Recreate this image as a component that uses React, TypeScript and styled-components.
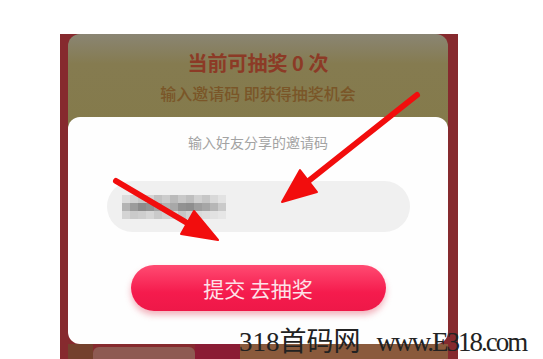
import React from "react";
import styled, { createGlobalStyle } from "styled-components";

const GlobalStyle = createGlobalStyle`
  html, body { margin: 0; padding: 0; background: #ffffff; }
  body { font-family: "Noto Sans CJK SC", "Noto Sans", sans-serif; }
  * { box-sizing: border-box; }
`;

const Page = styled.div`
  position: relative;
  width: 543px;
  height: 359px;
  overflow: hidden;
  padding: 34px 0 0 60px;
  background: #ffffff;
`;

const Frame = styled.div`
  width: 398px;
  height: 325px;
  background: #862a2e;
  padding: 0 10px 0 8px;
  display: flex;
  flex-direction: column;
`;

const Panel = styled.div`
  flex: 1;
  display: flex;
  flex-direction: column;
  border-radius: 12px 12px 0 0;
  background: linear-gradient(
    180deg,
    #8a8573 0px,
    #857b50 30px,
    #847a4a 100px,
    #862a2e 112px
  );
  overflow: hidden;
`;

const Header = styled.div`
  height: 83px;
  padding-top: 15px;
  display: flex;
  flex-direction: column;
  align-items: center;
  gap: 5px;
`;

const Title = styled.div`
  font-size: 20px;
  line-height: 28px;
  font-weight: 700;
  color: #8c3a26;
  white-space: pre;
`;

const Subtitle = styled.div`
  font-size: 16px;
  line-height: 22px;
  font-weight: 500;
  color: #7a5628;
  white-space: pre;
`;

const Modal = styled.div`
  height: 227px;
  background: #fefefe;
  border-radius: 12px;
  display: flex;
  flex-direction: column;
  align-items: center;
  padding-top: 15px;
`;

const Hint = styled.div`
  font-size: 14px;
  line-height: 20px;
  color: #a3a3a3;
`;

const CodeField = styled.div`
  margin-top: 29px;
  width: 303px;
  height: 51px;
  border-radius: 26px;
  background: #f0f0f0;
  display: flex;
  align-items: center;
  padding-left: 15px;
`;

const SubmitButton = styled.button`
  margin-top: 33px;
  width: 255px;
  height: 46px;
  border: none;
  border-radius: 23px;
  background: linear-gradient(180deg, #ff4b72 0%, #f51b4d 60%, #ee1848 100%);
  box-shadow: 0 4px 6px rgba(220, 40, 70, 0.35);
  color: #fde2e8;
  font-family: "Noto Sans CJK SC", "Noto Sans", sans-serif;
  font-size: 21px;
  line-height: 46px;
  padding: 0;
  white-space: pre;
`;

const Footer = styled.div`
  flex: 1;
  display: flex;
  align-items: stretch;
`;

const FooterBlock = styled.div<{ $w: number; $bg: string; $round?: boolean }>`
  width: ${(p) => p.$w}px;
  flex: ${(p) => (p.$w === 0 ? 1 : "none")};
  background: ${(p) => p.$bg};
  border-radius: ${(p) => (p.$round ? "6px 6px 0 0" : "0")};
  margin-top: ${(p) => (p.$round ? "3px" : "0")};
`;

const Overlay = styled.svg`
  position: absolute;
  left: 0;
  top: 0;
  width: 543px;
  height: 359px;
  pointer-events: none;
`;

const Watermark = styled.div`
  position: absolute;
  left: 239px;
  top: 326px;
  display: flex;
  gap: 16px;
  font-family: "Liberation Serif", "Noto Sans CJK SC", serif;
  font-size: 27px;
  line-height: 32px;
  color: #222222;
  white-space: pre;
`;

const WatermarkPart = styled.span<{ $tight?: boolean }>`
  letter-spacing: ${(p) => (p.$tight ? "-2px" : "0")};
`;

const mosaic: string[][] = [
  ["#dcdcdc", "#d2d2d2", "#c8c8c8", "#d4d4d4", "#c2c2c2", "#cccccc", "#bababa", "#c8c8c8", "#bebebe", "#d0d0d0", "#c6c6c6", "#d8d8d8", "#e2e2e2"],
  ["#b4b4b4", "#9c9c9c", "#8c8c8c", "#939393", "#a2a2a2", "#b2b2b2", "#a8a8a8", "#929292", "#8e8e8e", "#9e9e9e", "#a6a6a6", "#b6b6b6", "#cacaca"],
  ["#d4d4d4", "#cacaca", "#cecece", "#d6d6d6", "#cacaca", "#d2d2d2", "#d6d6d6", "#c6c6c6", "#d2d2d2", "#dadada", "#dedede", "#e2e2e2", "#e6e6e6"],
];

const Mosaic: React.FC = () => (
  <svg width="104" height="24" viewBox="0 0 104 24">
    <defs>
      <filter id="soft">
        <feGaussianBlur stdDeviation="0.7" />
      </filter>
    </defs>
    <g filter="url(#soft)">
      {mosaic.map((row, r) =>
        row.map((c, i) => (
          <rect key={`${r}-${i}`} x={i * 8} y={r * 8} width={8} height={8} fill={c} />
        ))
      )}
    </g>
  </svg>
);

const Arrows: React.FC = () => (
  <Overlay viewBox="0 0 543 359">
    <g fill="#f20d0d" stroke="#f20d0d" strokeLinecap="round" strokeLinejoin="round">
      <line x1="417" y1="95" x2="306" y2="183" strokeWidth="6" />
      <polygon points="282,202 300,170 317,192" strokeWidth="2" />
      <line x1="116" y1="181" x2="194" y2="227" strokeWidth="6" />
      <polygon points="218,240 194,211 181,234" strokeWidth="2" />
    </g>
  </Overlay>
);

export default function App() {
  return (
    <>
      <GlobalStyle />
      <Page>
        <Frame>
          <Panel>
            <Header>
              <Title>当前可抽奖 0 次</Title>
              <Subtitle>输入邀请码 即获得抽奖机会</Subtitle>
            </Header>
            <Modal>
              <Hint>输入好友分享的邀请码</Hint>
              <CodeField>
                <Mosaic />
              </CodeField>
              <SubmitButton>提交 去抽奖</SubmitButton>
            </Modal>
            <Footer>
              <FooterBlock $w={25} $bg="#74412d" />
              <FooterBlock $w={102} $bg="#8e5a52" $round />
              <FooterBlock $w={45} $bg="#8a1c34" />
              <FooterBlock $w={0} $bg="#8a5a3c" />
            </Footer>
          </Panel>
        </Frame>
        <Arrows />
        <Watermark>
          <WatermarkPart>318首码网</WatermarkPart>
          <WatermarkPart $tight>www.E318.com</WatermarkPart>
        </Watermark>
      </Page>
    </>
  );
}
